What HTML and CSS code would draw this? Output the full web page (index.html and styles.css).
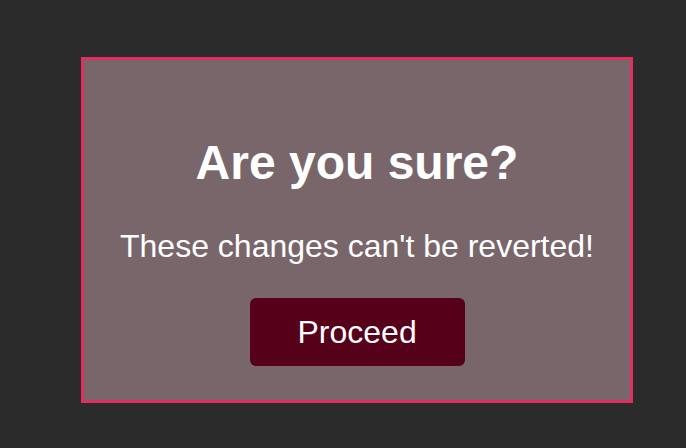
FILE: index.html
```html
<!DOCTYPE html>
<html>
<head>
<meta charset="utf-8">
<link rel="stylesheet" href="styles.css">
</head>
<body>
<div class="dialog">
  <h1 class="title">Are you sure?</h1>
  <p class="message">These changes can't be reverted!</p>
  <button class="proceed">Proceed</button>
</div>
</body>
</html>
```
FILE: styles.css
```css
html, body {
  margin: 0;
  padding: 0;
  background: #2b2b2b;
  font-family: "Liberation Sans", Arial, sans-serif;
}
body {
  padding-top: 57px;
  padding-left: 81px;
  height: 448px;
  box-sizing: border-box;
}
.dialog {
  box-sizing: border-box;
  width: 552px;
  border: 3px solid #e1305f;
  background: #79666b;
  padding: 75px 0 34px;
  text-align: center;
  color: #ffffff;
}
.title {
  margin: 0 0 38px;
  font-size: 48px;
  line-height: 55px;
  font-weight: 700;
}
.message {
  margin: 0 0 33px;
  font-size: 32px;
  line-height: 37px;
}
.proceed {
  font-family: "Liberation Sans", Arial, sans-serif;
  font-size: 32px;
  line-height: 36px;
  padding: 16px 48px;
  border: none;
  border-radius: 6px;
  background: #56001a;
  color: #ffffff;
  width: 215px;
  cursor: pointer;
}
```
